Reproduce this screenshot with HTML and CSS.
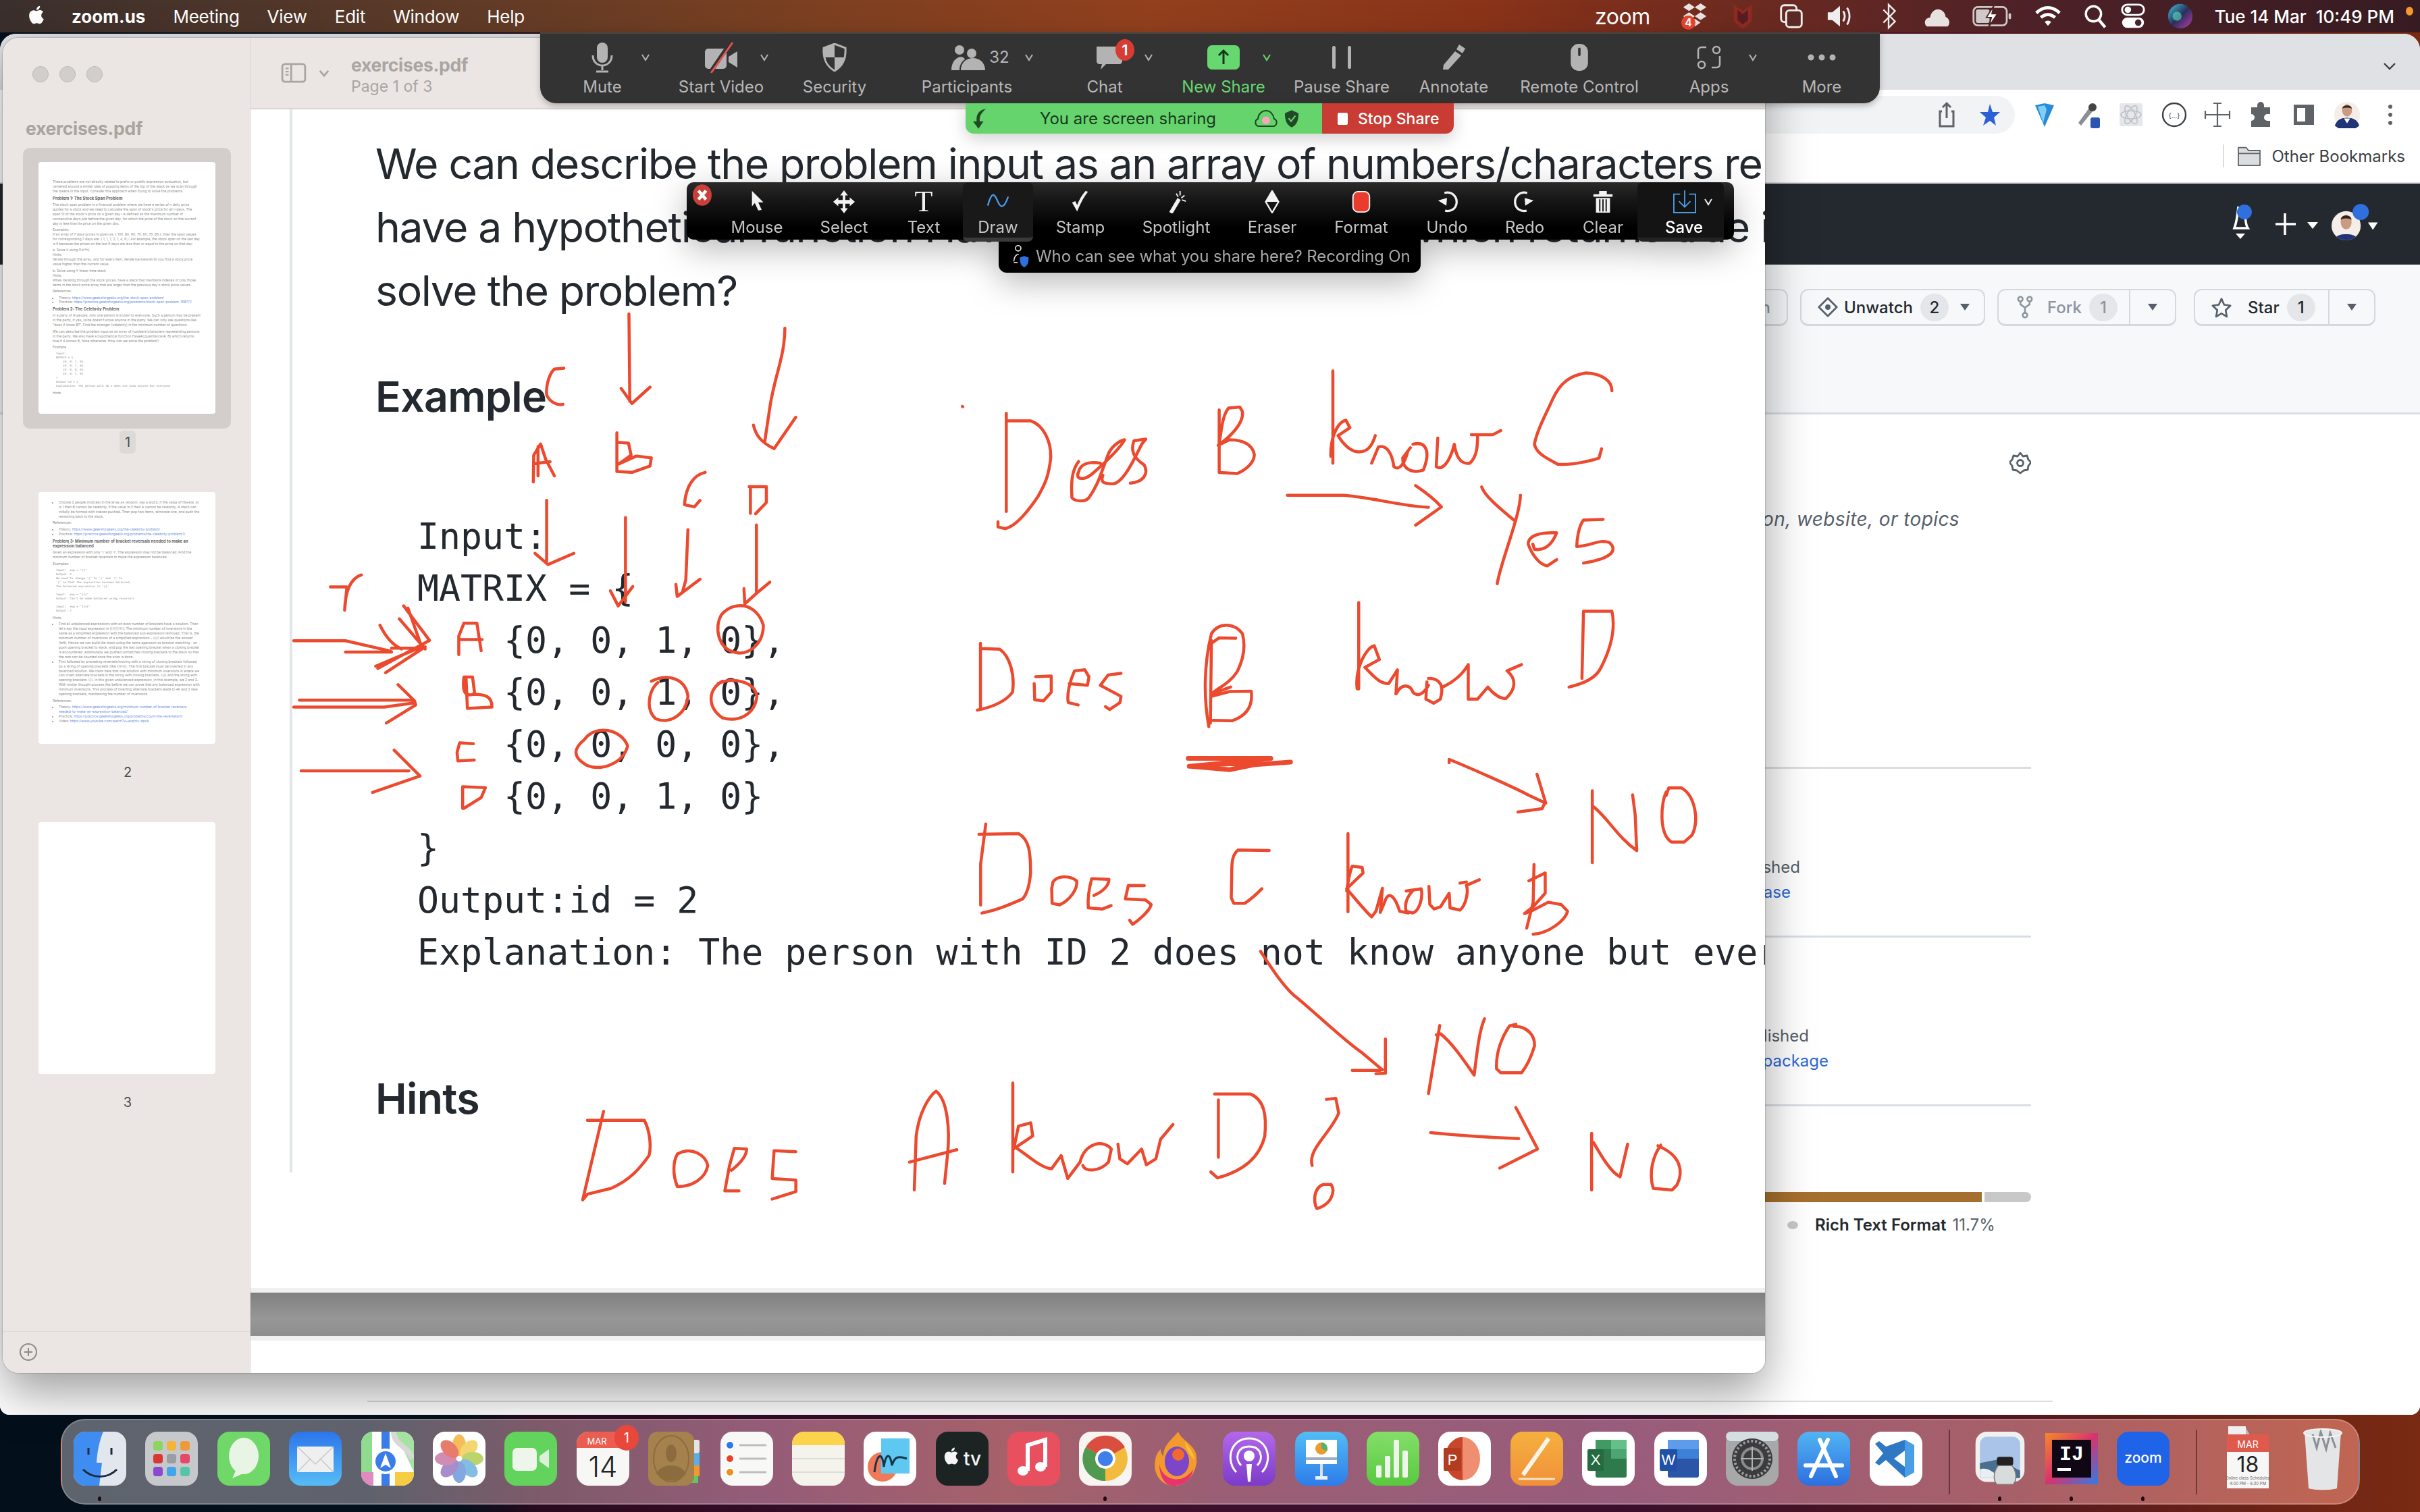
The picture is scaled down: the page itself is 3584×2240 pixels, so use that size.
FILE: index.html
```html
<!DOCTYPE html>
<html lang="en">
<head>
    <meta charset="UTF-8">
    <title>zoom.us - exercises.pdf</title>
    <link rel="stylesheet" href="styles.css">
</head>
<body>
<div class="desktop">

    <header class="menubar">
        <div class="menu-left">
            <svg class="apple" viewBox="0 0 24 24"><path fill="#fff" d="M18.71 19.5c-.83 1.24-1.71 2.45-3.05 2.47-1.34.03-1.77-.79-3.29-.79-1.53 0-2 .77-3.27.82-1.31.05-2.3-1.32-3.14-2.53C4.25 17 2.94 12.45 4.7 9.39c.87-1.52 2.43-2.48 4.12-2.51 1.28-.02 2.5.87 3.29.87.78 0 2.26-1.07 3.8-.91.65.03 2.47.26 3.64 1.98-.09.06-2.17 1.28-2.15 3.81.03 3.02 2.65 4.03 2.68 4.04-.03.07-.42 1.44-1.38 2.83M13 3.5c.73-.83 1.94-1.46 2.94-1.5.13 1.17-.34 2.35-1.04 3.19-.69.85-1.83 1.51-2.95 1.42-.15-1.15.41-2.35 1.05-3.11z"/></svg>
            <span class="menu-app">zoom.us</span>
            <span>Meeting</span>
            <span>View</span>
            <span>Edit</span>
            <span>Window</span>
            <span>Help</span>
        </div>
        <div class="menu-right">
            <span class="menu-zoom">zoom</span>
            <svg class="st" viewBox="0 0 44 44"><g fill="#e9e4e2"><path d="M14 2l9 6-9 6-9-6zM32 2l9 6-9 6-9-6zM14 16l9 6-9 6-9-6zM32 16l9 6-9 6-9-6zM23 26l9 6-9 6-9-6z"/></g><circle cx="13" cy="32" r="11" fill="#e5452f"/><text x="13" y="38" class="st-badge">4</text></svg>
            <svg class="st" viewBox="0 0 44 44"><path d="M8 4l14 10L36 4v26l-14 12L8 30z" fill="#8f2a24"/><path d="M14 12v16l8 7 8-7V12l-8 7z" fill="#5a1d1f"/></svg>
            <svg class="st" viewBox="0 0 44 44"><g fill="none" stroke="#eee" stroke-width="3"><rect x="6" y="5" width="24" height="26" rx="5"/><rect x="14" y="13" width="24" height="26" rx="5" fill="#5b2a24"/></g></svg>
            <svg class="st" viewBox="0 0 44 44"><path d="M3 16h7l12-10v32L10 28H3z" fill="#eee"/><path d="M27 14c3 5 3 11 0 16M33 9c5 8 5 18 0 26" fill="none" stroke="#eee" stroke-width="3"/></svg>
            <svg class="st" viewBox="0 0 44 44"><path d="M14 12l18 18-10 10V4l10 10-18 18" fill="none" stroke="#eee" stroke-width="2.5"/></svg>
            <svg class="st" viewBox="0 0 44 44"><path d="M6 38c-6-5-3-14 5-14 1-9 9-15 16-12 6 2 8 8 8 11 6 2 8 11 3 15z" fill="#e7e2e0"/></svg>
            <svg class="st st-wide" viewBox="0 0 68 44"><rect x="3" y="7" width="54" height="30" rx="7" fill="none" stroke="#cfcac8" stroke-width="3"/><rect x="7" y="11" width="22" height="22" rx="3" fill="#cfcac8"/><path d="M36 5L24 24h8l-4 15 14-21h-9z" fill="#fff" stroke="#4c2226" stroke-width="2"/><rect x="60" y="17" width="4" height="10" rx="2" fill="#cfcac8"/></svg>
            <svg class="st" viewBox="0 0 44 44"><g fill="none" stroke="#fff" stroke-width="5"><path d="M4 17c11-11 25-11 36 0M11 24c7-6 15-6 22 0"/></g><path d="M17 31c3-3 7-3 10 0l-5 6z" fill="#fff"/></svg>
            <svg class="st st-search" viewBox="0 0 44 44"><circle cx="19" cy="18" r="13" fill="none" stroke="#fff" stroke-width="4"/><path d="M28 28l11 13" stroke="#fff" stroke-width="5"/></svg>
            <svg class="st st-ctrl" viewBox="0 0 44 44"><rect x="5" y="4" width="34" height="16" rx="8" fill="none" stroke="#fff" stroke-width="3"/><circle cx="14" cy="12" r="5" fill="#fff"/><rect x="5" y="24" width="34" height="16" rx="8" fill="#fff"/><circle cx="30" cy="32" r="5" fill="#46222a"/></svg>
            <svg class="st" viewBox="0 0 44 44"><defs><linearGradient id="siri" x1="0" y1="0" x2="1" y2="1"><stop offset="0" stop-color="#3ec6e0"/><stop offset=".5" stop-color="#28305a"/><stop offset="1" stop-color="#c23bb0"/></linearGradient></defs><circle cx="22" cy="22" r="19" fill="url(#siri)"/><circle cx="17" cy="22" r="7" fill="#5ee0c0" opacity=".6"/></svg>
            <span class="menu-clock">Tue 14 Mar&nbsp;&nbsp;10:49 PM</span>
        </div>
    </header>
    <span class="rec-dot"></span>

    <!-- browser window behind the preview -->
    <section class="browser">
        <div class="tabstrip">
            <svg class="ico-chev" viewBox="0 0 20 12"><path d="M2 2l8 8 8-8" fill="none" stroke="#3c4043" stroke-width="2.4"/></svg>
        </div>
        <div class="addrbar">
            <div class="addr-pill">
                <svg class="addr-ico" viewBox="0 0 30 40"><path d="M15 3v22M9 9l6-6 6 6M8 15H5v22h20V15h-3" fill="none" stroke="#5f6368" stroke-width="3"/></svg>
                <svg class="addr-ico" viewBox="0 0 30 40"><path d="M15 4l4 12 11 0-9 8 3 12-9-7-10 7 4-12-9-8h12z" fill="#2a62d6"/></svg>
            </div>
            <div class="ext-row">
                <svg class="ext" viewBox="0 0 40 40"><path d="M6 6l14-3 14 3-14 32z" fill="#2a8cd8"/><path d="M10 8l10-2 3 6-5 20z" fill="#7fd0f4"/></svg>
                <svg class="ext" viewBox="0 0 40 40"><path d="M6 32l16-22 5 5-17 21z" fill="#8a8f96"/><circle cx="27" cy="9" r="6" fill="#444"/><rect x="24" y="24" width="14" height="16" rx="3" fill="#2b55b0"/></svg>
                <svg class="ext" viewBox="0 0 40 40"><rect x="3" y="3" width="34" height="34" rx="3" fill="#e5e7ea"/><g fill="none" stroke="#bdc1c6" stroke-width="1.6"><ellipse cx="20" cy="20" rx="15" ry="6"/><ellipse cx="20" cy="20" rx="15" ry="6" transform="rotate(60 20 20)"/><ellipse cx="20" cy="20" rx="15" ry="6" transform="rotate(120 20 20)"/></g></svg>
                <svg class="ext" viewBox="0 0 40 40"><circle cx="20" cy="20" r="17" fill="none" stroke="#3c4043" stroke-width="2.4"/><text x="20" y="25" class="ext-text">{...}</text></svg>
                <svg class="ext" viewBox="0 0 40 40"><path d="M20 3v34M2 20h36M14 3h12M14 37h12M2 14v12M38 14v12" fill="none" stroke="#5f6368" stroke-width="2.2"/></svg>
                <svg class="ext" viewBox="0 0 40 40"><path d="M15 6a5 5 0 0 1 10 0v3h9v10h-4a5 5 0 0 0 0 10h4v9H6v-9a5 5 0 0 0 0-10V9h9z" fill="#5f6368"/></svg>
                <svg class="ext" viewBox="0 0 40 40"><rect x="5" y="5" width="30" height="30" fill="#5f6368"/><rect x="10" y="10" width="12" height="20" fill="#fff"/></svg>
                <svg class="ext" viewBox="0 0 44 44"><circle cx="22" cy="22" r="21" fill="#f5ede7"/><path d="M2 40c3-10 11-13 20-13s17 3 20 13l-6 4H8z" fill="#1f3575"/><path d="M17 28l5 8 5-8z" fill="#fff"/><ellipse cx="22" cy="15" rx="8" ry="10" fill="#c99b80"/><path d="M14 12c1-7 15-7 16 0-4-2-12-2-16 0z" fill="#2d2420"/></svg>
                <svg class="ext" viewBox="0 0 40 40"><g fill="#5f6368"><circle cx="20" cy="8" r="3"/><circle cx="20" cy="20" r="3"/><circle cx="20" cy="32" r="3"/></g></svg>
            </div>
        </div>
        <div class="bookmarks">
            <span class="bm-sep"></span>
            <svg class="bm-folder" viewBox="0 0 40 36"><path d="M2 4h13l4 5h19v25H2z" fill="#dcdde0" stroke="#5f6368" stroke-width="2"/><path d="M2 14h36" stroke="#5f6368" stroke-width="2"/></svg>
            <span>Other Bookmarks</span>
        </div>
        <div class="gh-header">
            <svg class="gh-bell" viewBox="0 0 40 64"><path d="M18 6c-1 10-2 22-6 32h20c-4-6-4-18-4-26" fill="none" stroke="#fff" stroke-width="3.5"/><path d="M14 46h14l-7 8z" fill="#fff"/><circle cx="27" cy="14" r="11" fill="#2f6fde"/></svg>
            <svg class="gh-plus" viewBox="0 0 66 40"><path d="M15 4v32M1 20h30" stroke="#fff" stroke-width="3.5"/><path d="M48 17h16l-8 10z" fill="#fff"/></svg>
            <svg class="gh-avatar" viewBox="0 0 80 60"><defs><clipPath id="face"><circle cx="33" cy="32" r="18"/></clipPath></defs><g clip-path="url(#face)"><rect x="10" y="10" width="50" height="50" fill="#f5ede7"/><g transform="translate(13.5 9.5) scale(.75)"><path d="M4 58c3-12 12-14 22-14s19 2 22 14z" fill="#1f3575"/><ellipse cx="26" cy="24" rx="9" ry="12" fill="#c99b80"/><path d="M17 20c1-9 17-9 18 0-4-3-14-3-18 0z" fill="#2d2420"/></g></g><circle cx="51" cy="15" r="10" fill="#2f6fde"/><path d="M60 28h12l-6 9z" fill="#fff"/></svg>
        </div>
        <div class="gh-repohead">
            <div class="gh-btn gh-btn-pin"><span>Pin</span></div>
            <div class="gh-btn gh-btn-watch">
                <svg class="gh-ico" viewBox="0 0 34 34"><path d="M17 2L32 17 17 32 2 17z" fill="none" stroke="#57606a" stroke-width="3" stroke-linejoin="round"/><circle cx="17" cy="17" r="4.5" fill="#57606a"/></svg>
                <span class="gh-label">Unwatch</span>
                <span class="gh-count">2</span>
                <span class="gh-caret"></span>
            </div>
            <div class="gh-btn gh-btn-fork">
                <div class="gh-main">
                    <svg class="gh-ico" viewBox="0 0 34 40"><g fill="none" stroke="#8c959f" stroke-width="3"><circle cx="9" cy="6" r="4"/><circle cx="25" cy="6" r="4"/><circle cx="17" cy="34" r="4"/><path d="M9 10v5l8 6 8-6v-5M17 21v9"/></g></svg>
                    <span class="gh-label gh-muted">Fork</span>
                    <span class="gh-count gh-muted">1</span>
                </div>
                <div class="gh-drop"><span class="gh-caret"></span></div>
            </div>
            <div class="gh-btn gh-btn-star">
                <div class="gh-main">
                    <svg class="gh-ico" viewBox="0 0 34 34"><path d="M17 3l4.5 10 10.5 1.5-8 7.5 2 11-9-5.5-9 5.5 2-11-8-7.5 10.5-1.5z" fill="none" stroke="#57606a" stroke-width="3" stroke-linejoin="round"/></svg>
                    <span class="gh-label">Star</span>
                    <span class="gh-count">1</span>
                </div>
                <div class="gh-drop"><span class="gh-caret"></span></div>
            </div>
        </div>
        <div class="gh-body">
            <div class="gh-side">
                <div class="gh-gear">
                    <svg viewBox="0 0 32 34"><path d="M16 2l4 5 6-1 2 6 4 4-4 5-1 6-6 1-5 4-5-4-6-1-1-6-4-5 4-4 2-6 6 1z" fill="none" stroke="#57606a" stroke-width="2.8" stroke-linejoin="round"/><circle cx="16" cy="17" r="4.5" fill="none" stroke="#57606a" stroke-width="2.8"/></svg>
                </div>
                <div class="gh-desc">No description, website, or topics</div>
                <div class="gh-block gh-block-rel">
                    <div class="gh-line gh-end-rel1">No releases published</div>
                    <div class="gh-link gh-end-rel2">Create a new release</div>
                </div>
                <div class="gh-block gh-block-pkg">
                    <div class="gh-line gh-end-pkg1">No packages published</div>
                    <div class="gh-link gh-end-pkg2">Publish your first package</div>
                </div>
                <div class="gh-langs">
                    <div class="gh-bar"><span class="gh-bar-a"></span><span class="gh-bar-b"></span></div>
                    <div class="gh-lang"><i></i><b>Rich Text Format</b><span>11.7%</span></div>
                </div>
            </div>
            <div class="gh-footline"></div>
        </div>
    </section>

    <!-- preview window with the pdf -->
    <section class="preview">
        <aside class="pv-side">
            <div class="lights"><i></i><i></i><i></i></div>
            <div class="pv-side-title">exercises.pdf</div>
            <div class="thumb-wrap is-current">
                <div class="thumb">
                    <p>These problems are not directly related to prefix or postfix expression evaluation, but centered around a similar idea of popping items of the top of the stack as we scan through the tokens in the input. Consider this approach when trying to solve the problems.</p>
                    <h6>Problem 1: The Stock Span Problem</h6>
                    <p>The stock span problem is a financial problem where we have a series of n daily price quotes for a stock and we need to calculate the span of stock's price for all n days. The span Si of the stock's price on a given day i is defined as the maximum number of consecutive days just before the given day, for which the price of the stock on the current day is less than its price on the given day.</p>
                    <p>Examples:<br>If an array of 7 days prices is given as: { 100, 80, 60, 70, 60, 75, 85 }, then the span values for corresponding 7 days are: { 1, 1, 1, 2, 1, 4, 6 }. For example, the stock span on the last day is 6 because the prices on the last 6 days are less than or equal to the price on that day.</p>
                    <p>a. Solve it using O(n*n)<br>Hints:<br>Iterate through the array, and for every item, iterate backwards till you find a stock price value higher than the current value.</p>
                    <p>b. Solve using Y linear-time stack<br>Hints:<br>When iterating through the stock prices, have a stack that maintains indexes of only those items in the stock price array that are larger than the previous day's stock price values.</p>
                    <p>References:</p>
                    <ul><li>Theory: <a>https://www.geeksforgeeks.org/the-stock-span-problem/</a></li><li>Practice: <a>https://practice.geeksforgeeks.org/problems/stock-span-problem-1587/1/</a></li></ul>
                    <h6>Problem 2: The Celebrity Problem</h6>
                    <p>In a party of N people, only one person is known to everyone. Such a person may be present in the party, if yes, (s)he doesn't know anyone in the party. We can only ask questions like "does A know B?". Find the stranger (celebrity) in the minimum number of questions.</p>
                    <p>We can describe the problem input as an array of numbers/characters representing persons in the party. We also have a hypothetical function HaveAcquaintance(A, B) which returns true if A knows B, false otherwise. How can we solve the problem?</p>
                    <p>Example</p>
                    <pre>  Input:
  MATRIX = {
      {0, 0, 1, 0},
      {0, 0, 1, 0},
      {0, 0, 0, 0},
      {0, 0, 1, 0}
  }
  Output:id = 2
  Explanation: The person with ID 2 does not know anyone but everyone</pre>
                    <p>Hints</p>
                </div>
            </div>
            <div class="thumb-num is-current">1</div>
            <div class="thumb-wrap">
                <div class="thumb thumb-cont">
                    <ul><li>Choose 2 people (indices) in the array as random, say a and b. If the value of Have(a, b) is 1 then B cannot be celebrity. If the value is 0 then A cannot be celebrity. A stack can initially be formed with indices pushed. Then pop two items, eliminate one, and push the remaining back to the stack.</li></ul>
                    <p>References:</p>
                    <ul><li>Theory: <a>https://www.geeksforgeeks.org/the-celebrity-problem/</a></li><li>Practice: <a>https://practice.geeksforgeeks.org/problems/the-celebrity-problem/1/</a></li></ul>
                    <h6>Problem 3: Minimum number of bracket reversals needed to make an expression balanced</h6>
                    <p>Given an expression with only '}' and '{'. The expression may not be balanced. Find the minimum number of bracket reversals to make the expression balanced.</p>
                    <p>Examples:</p>
                    <pre>  Input:  exp = "}{"
  Output: 2
  We need to change '}' to '{' and '{' to
  '}' so that the expression becomes balanced,
  the balanced expression is '{}'

  Input:  exp = "{{{"
  Output: Can't be made balanced using reversals

  Input:  exp = "{{{{"
  Output: 2</pre>
                    <p>Hints:</p>
                    <ul><li>Find all unbalanced expressions with an even number of brackets have a solution. Then let's say the input expression is {{{{}}}{{{. The minimum number of inversions in the same as a simplified expression with the balanced sub-expression removed. That is, the minimum number of inversions of a simplified expression - {{{{ would be the answer (left). Hence we can build the stack using the same approach as bracket matching - on push opening bracket to stack, and pop the last opening bracket when a closing bracket is encountered. Additionally we pushed unmatched closing brackets to the stack so that the rest can be counted once the scan is done.</li><li>First followed by preceding reversals/moving with a string of closing brackets followed by a string of opening brackets (like }}}{{{). The first bracket must be inverted in any balanced solution. We claim here that one solution with minimum inversions is where we can invert alternate brackets in the string with closing brackets. {{{{ and the string with opening brackets: {{{. In this given unbalanced expression, in this example, we 2 and 2. With similar thought process like before we can prove that any balanced expression with minimum inversions. This process of inverting alternate brackets leads to 4k and 2 new opening brackets, maintaining the number of inversions.</li></ul>
                    <p>References:</p>
                    <ul><li>Theory: <a>https://www.geeksforgeeks.org/minimum-number-of-bracket-reversals-needed-to-make-an-expression-balanced/</a></li><li>Practice: <a>https://practice.geeksforgeeks.org/problems/count-the-reversals/0/</a></li><li>Video: <a>https://www.youtube.com/watch?v=wiqfxlv-dpxA</a></li></ul>
                </div>
            </div>
            <div class="thumb-num">2</div>
            <div class="thumb-wrap">
                <div class="thumb"></div>
            </div>
            <div class="thumb-num">3</div>
            <div class="pv-side-foot">
                <svg viewBox="0 0 28 28"><circle cx="14" cy="14" r="12" fill="none" stroke="#8d8985" stroke-width="2"/><path d="M14 8v12M8 14h12" stroke="#8d8985" stroke-width="2"/></svg>
            </div>
        </aside>
        <div class="pv-main">
            <div class="pv-toolbar">
                <svg class="pv-ico" viewBox="0 0 40 32"><rect x="2" y="2" width="36" height="28" rx="4" fill="none" stroke="#aaa5a2" stroke-width="3"/><path d="M16 2v28" stroke="#aaa5a2" stroke-width="3"/><path d="M7 9h5M7 14h5M7 19h5" stroke="#aaa5a2" stroke-width="2.5"/></svg>
                <svg class="pv-chev" viewBox="0 0 20 14"><path d="M3 3l7 8 7-8" fill="none" stroke="#aaa5a2" stroke-width="3"/></svg>
                <div class="pv-titles">
                    <strong>exercises.pdf</strong>
                    <span>Page 1 of 3</span>
                </div>
            </div>
            <div class="pv-page">
                <article class="md">
                    <p class="md-line">We can describe the problem input as an array of numbers/characters representing persons in the party.</p>
                    <p class="md-line">have a hypothetical function HaveAcquaintance(A, B) which returns true if A knows B, false otherwise.</p>
                    <p class="md-line">solve the problem?</p>
                    <h3 class="md-h md-h-first">Example</h3>
                    <pre class="md-pre">Input:
MATRIX = {
    {0, 0, 1, 0},
    {0, 0, 1, 0},
    {0, 0, 0, 0},
    {0, 0, 1, 0}
}
Output:id = 2
Explanation: The person with ID 2 does not know anyone but everyone knows him</pre>
                    <h3 class="md-h">Hints</h3>
                </article>
            </div>
            <div class="pv-gap">
                <div class="pv-gap-bar"></div>
            </div>
        </div>
    </section>

    <!-- red pen strokes drawn over the shared screen -->
    <svg class="ink" viewBox="0 0 3584 2240">
        <g transform="translate(400 400) scale(.638)">
            <path d="M833 102L835 305M815 275L840 310L882 272"/>
            <path d="M1195 135C1195 200 1170 250 1160 320L1148 400M1122 360C1128 385 1140 400 1170 415L1220 342"/>
            <path d="M682 228L660 230C648 240 640 270 642 290C648 305 665 315 680 312"/>
            <path d="M611 492L612 430L628 404L640 440L660 478M612 450L650 445M622 410L622 478"/>
            <path d="M805 378L805 468M805 400L832 402L838 430L810 450L850 432L885 436L882 455L840 470L805 468"/>
            <path d="M1010 470C985 475 965 500 962 545L985 550L998 535"/>
            <path d="M1112 503L1152 503L1152 540L1127 566M1115 503L1115 565"/>
            <path d="M642 535L642 675M615 658L645 684L705 658"/>
            <path d="M825 575L825 770M790 745L808 780L842 735"/>
            <path d="M970 603L965 720L958 745M942 730L945 758L998 718"/>
            <path d="M1129 592L1129 750M1100 740L1102 775L1130 750L1160 725"/>
            <path d="M140 736L178 736M212 708C190 715 175 740 173 790L178 740"/>
            <path d="M1048 800C1080 765 1130 775 1145 825C1145 870 1110 895 1080 888C1040 880 1030 830 1048 800"/>
            <path d="M438 893L438 850L450 820L480 820L490 884M438 858L492 858"/>
            <path d="M450 945C445 985 455 990 475 985L470 945L450 945M455 950L458 1018L515 1015C515 990 500 985 470 985"/>
            <path d="M472 1100L440 1098L434 1120L436 1140L474 1138"/>
            <path d="M447 1250L447 1200L500 1202L490 1225L450 1250"/>
            <path d="M885 955C925 935 965 950 970 990C965 1035 925 1055 895 1042C870 1020 880 975 900 958"/>
            <path d="M1040 960C1075 945 1125 955 1130 990C1125 1035 1085 1050 1050 1040C1015 1015 1015 975 1050 955"/>
            <path d="M730 1090C755 1055 815 1065 830 1105C820 1145 770 1165 735 1150C700 1130 705 1110 730 1090"/>
            <path d="M55 861L175 861L280 885M175 887L282 887M255 825C270 855 285 870 305 880M310 780L370 860M300 810L360 880M320 785L350 870M250 925L370 860M268 935L360 875M245 920L340 880M282 878L355 878"/>
            <path d="M55 1015L265 1015L335 1005M68 999L330 999M297 963L335 1000L338 1010L270 1052"/>
            <path d="M72 1163L322 1163M288 1115L348 1175L238 1213"/>
        </g>
        <g transform="translate(1400 500) scale(.7653 .5102)">
            <path d="M33 200L34 201"/>
            <path d="M118 220L118 505M118 242L165 242C190 255 205 300 204 350C200 400 195 420 180 460C160 505 135 550 115 555L102 550L102 535"/>
            <path d="M258 360C245 385 243 420 245 465C250 475 270 480 278 465C295 430 300 400 315 340C320 320 335 300 347 297C335 330 300 375 285 395C270 415 250 415 258 390C262 365 280 360 300 365M305 400C300 420 305 425 325 425C345 420 365 355 380 310L388 295L365 300C358 330 365 350 385 370C395 400 380 420 358 423"/>
            <path d="M530 210L530 392L565 395C580 385 598 365 598 340C595 315 580 297 550 297L528 313C550 290 578 250 575 215L570 202L548 205C535 230 535 270 530 305"/>
            <path d="M750 97L750 365M746 345C745 300 755 250 775 240L783 262L760 285C770 310 785 332 800 332C815 332 825 320 832 285M825 365L838 318C855 310 865 340 868 375C880 390 890 360 895 330M905 310C930 300 940 330 925 385C905 395 885 385 885 350L900 320M953 292L950 375C960 385 975 370 985 310C988 340 995 370 1015 365C1030 345 1030 310 1030 282M1018 282L1060 282L1075 270"/>
            <path d="M1290 155C1290 125 1270 105 1240 103C1210 110 1190 130 1175 180C1160 230 1145 270 1140 310C1145 340 1165 350 1185 368C1215 372 1255 355 1265 350L1270 323"/>
            <path d="M662 458L770 458C820 462 880 490 935 493M910 430C930 450 950 475 960 492L910 545"/>
            <path d="M1038 434C1045 465 1085 510 1100 530M1113 458C1112 520 1075 650 1068 715"/>
            <path d="M1137 600L1140 615C1160 620 1175 600 1183 567C1150 565 1128 575 1128 600C1135 630 1150 660 1165 663L1183 645"/>
            <path d="M1273 528L1235 530C1225 550 1222 590 1222 607C1250 605 1265 585 1285 595C1300 615 1295 640 1235 655"/>
            <path d="M68 888L68 1080M68 903L105 905C125 925 135 980 130 1030C115 1060 85 1075 62 1082"/>
            <path d="M175 985L205 983L205 1030L190 1055L173 1052L172 1005"/>
            <path d="M240 1005L275 1010L278 985L270 965L250 968C240 1000 235 1040 238 1060L257 1067"/>
            <path d="M340 975L315 980L300 1010L340 1042L338 1060L318 1080L310 1072"/>
            <path d="M510 1130C500 1050 500 950 515 860C530 825 560 830 575 860C582 900 575 940 565 970C550 1005 530 1015 515 1035L552 1015M515 1042L550 1028L592 1027C595 1060 590 1095 555 1113L518 1112M513 890L530 872L562 873M515 880L513 1120"/>
            <path class="ink-fat" d="M470 1222L630 1222L545 1235L472 1245L610 1232M475 1245L550 1255L600 1240L668 1233"/>
            <path d="M800 770L800 1020M797 1020C792 960 815 900 830 895L840 935L812 958C830 985 840 1005 858 1005L875 965L872 1035C885 1000 900 1010 905 1030C915 1045 925 1035 935 1010M935 990C960 990 965 1015 958 1050L945 1062L930 1050L932 1000M962 1015C985 1000 1000 980 1012 950L1012 1050L1030 1050L1050 1015C1060 1035 1075 1050 1085 1048C1105 1020 1105 990 1087 968L1115 950"/>
            <path d="M1232 990L1235 795L1290 795C1298 850 1285 910 1270 955C1260 990 1235 1005 1207 1015"/>
            <path d="M975 1235L975 1225C1000 1240 1100 1305 1130 1330L1162 1352L1145 1268M1160 1352L1155 1368L1108 1378"/>
            <path d="M1252 1316L1252 1525M1252 1360C1280 1390 1300 1450 1338 1490L1335 1385L1330 1328"/>
            <path d="M1395 1330L1400 1308L1425 1308C1450 1330 1460 1400 1445 1445L1430 1465L1405 1465C1380 1440 1385 1350 1395 1320"/>
        </g>
        <g transform="translate(1400 1180) scale(.6378 .3333)">
            <path d="M94 122L82 300L82 482M78 168L170 165C195 190 198 250 198 340C195 400 190 430 180 455C150 480 120 505 85 518"/>
            <path d="M250 380C260 350 290 350 305 375C308 410 290 460 265 482L248 475L247 410Z"/>
            <path d="M345 440C370 420 380 390 380 368L340 365C335 400 330 450 332 495L365 500L385 485"/>
            <path d="M462 396L425 395L418 455L465 460L478 480C475 510 445 555 435 568L428 550"/>
            <path d="M752 240L680 238C665 260 665 300 665 350L664 450L670 475L695 475C715 450 725 430 735 410"/>
            <path d="M935 165L935 512M932 420C935 380 940 330 945 310L968 315L970 340L932 410C950 450 975 510 990 535L1000 510L1015 408L1010 515L1020 470C1030 410 1045 450 1055 510L1075 518M1070 420L1105 410C1110 450 1100 510 1085 518L1070 510C1065 470 1075 440 1085 420M1123 400L1125 480L1135 500L1150 490L1170 430L1172 495L1195 505C1210 480 1215 420 1210 395L1240 370M1195 385L1210 380"/>
            <path d="M1367 302L1365 470L1350 585M1355 375L1393 340L1393 430L1365 490L1345 520L1360 510L1400 470L1430 480L1445 510C1440 550 1400 610 1365 612"/>
            <path d="M732 688C760 770 790 860 820 900C870 980 930 1090 965 1135L1015 1215M1022 1078L1022 1230L1000 1232M945 1217L1010 1217"/>
            <path d="M1148 1018L1122 1320M1140 1060L1150 1055C1180 1100 1210 1190 1228 1238C1235 1130 1240 1040 1252 988"/>
            <path d="M1310 1020L1325 1012L1320 1022C1350 1020 1370 1060 1368 1110C1360 1160 1350 1200 1338 1228L1290 1228L1280 1210C1278 1130 1295 1060 1310 1020"/>
        </g>
        <g transform="translate(400 1300) scale(1.403 .4847)">
            <path d="M352 715L330 985M335 742L395 742C402 780 402 830 400 850C390 890 380 925 360 950L335 968L330 985"/>
            <path d="M430 845C445 820 460 850 462 880C460 920 445 945 430 945C425 910 425 870 430 845"/>
            <path d="M487 895C498 870 503 850 503 830L490 828L485 880L480 958L495 958"/>
            <path d="M555 838L532 835L530 920L555 925L555 960L530 983"/>
            <path d="M680 955L682 790C685 720 695 670 703 653C715 680 718 770 715 850L712 935M675 870L725 832"/>
            <path d="M784 628L784 900M785 830L790 760L803 750L805 790L787 825C800 850 815 890 825 890L835 850L842 920L855 870C860 810 880 800 888 830L885 870C875 900 860 900 858 880M895 815L897 860L905 875L920 830L925 878L935 860L940 800L953 755"/>
            <path d="M1001 680L1001 855M997 662L1035 662C1050 680 1052 730 1050 790C1045 850 1030 895 1000 918L993 900"/>
            <path d="M1115 678L1125 675L1128 720C1120 780 1095 830 1100 880M1112 938C1100 950 1102 1000 1105 1012C1120 1000 1125 960 1120 938Z"/>
            <path d="M1225 780C1260 790 1290 795 1318 798M1315 703L1338 830L1298 888"/>
            <path d="M1395 782L1395 955M1397 810C1405 850 1415 900 1425 915L1433 815"/>
            <path d="M1465 820C1490 850 1492 900 1485 940L1480 955L1460 950C1455 900 1460 850 1468 818"/>
        </g>
    </svg>

    <!-- zoom meeting controls -->
    <div class="share-stack">
        <div class="zbar">
            <div class="zi">
                <div class="zi-top">
                    <svg class="zi-ico zi-mic" viewBox="0 0 36 46"><rect x="10" y="1" width="16" height="30" rx="8" fill="#b3b3b3"/><path d="M4 20c0 20 28 20 28 0M18 34v8M9 44h18" fill="none" stroke="#b3b3b3" stroke-width="3"/></svg>
                    <svg class="chev chev-mic" viewBox="0 0 14 12"><path d="M2 2l5 8 5-8" fill="none" stroke="#b3b3b3" stroke-width="2"/></svg>
                </div>
                <span>Mute</span>
            </div>
            <div class="zi">
                <div class="zi-top">
                    <svg class="zi-ico zi-vid" viewBox="0 0 50 46"><rect x="1" y="10" width="32" height="30" rx="5" fill="#b3b3b3"/><path d="M36 22l13-8v24l-13-8z" fill="#b3b3b3"/><path d="M39 1L9 45" stroke="#333" stroke-width="6"/><path d="M42 1L10 46" stroke="#e2534f" stroke-width="3"/></svg>
                    <svg class="chev chev-vid" viewBox="0 0 14 12"><path d="M2 2l5 8 5-8" fill="none" stroke="#b3b3b3" stroke-width="2"/></svg>
                </div>
                <span>Start Video</span>
            </div>
            <div class="zi">
                <div class="zi-top">
                    <svg class="zi-ico zi-sec" viewBox="0 0 36 42"><path d="M18 1l16 6c1 14-2 26-16 34C4 33 1 21 2 7z" fill="none" stroke="#b3b3b3" stroke-width="3"/><path d="M18 1v20H2c-1-5-1-9 0-14zM18 21h15c-2 8-7 15-15 20z" fill="#b3b3b3"/></svg>
                </div>
                <span>Security</span>
            </div>
            <div class="zi">
                <div class="zi-top zi-top-part">
                    <svg class="zi-ico zi-ppl" viewBox="0 0 50 38"><circle cx="12" cy="8" r="7" fill="#b3b3b3"/><circle cx="30" cy="13" r="7" fill="#b3b3b3"/><path d="M0 38c0-20 18-24 20-16-6 4-8 10-8 16zM14 38c0-24 36-24 36 0z" fill="#b3b3b3"/></svg>
                    <span class="zi-num">32</span>
                    <svg class="chev chev-ppl" viewBox="0 0 14 12"><path d="M2 2l5 8 5-8" fill="none" stroke="#b3b3b3" stroke-width="2"/></svg>
                </div>
                <span>Participants</span>
            </div>
            <div class="zi">
                <div class="zi-top">
                    <svg class="zi-ico zi-chat" viewBox="0 0 56 50"><path d="M4 14h34c2 0 4 2 4 4v18c0 2-2 4-4 4H18l-8 8 2-8H8c-2 0-4-2-4-4z" transform="translate(-4 -3)" fill="#b3b3b3"/><ellipse cx="42" cy="16" rx="14" ry="16" fill="#d63c34"/><text x="42" y="24" class="badge-text">1</text></svg>
                    <svg class="chev chev-chat" viewBox="0 0 14 12"><path d="M2 2l5 8 5-8" fill="none" stroke="#b3b3b3" stroke-width="2"/></svg>
                </div>
                <span>Chat</span>
            </div>
            <div class="zi zi-green">
                <div class="zi-top">
                    <svg class="zi-ico zi-share" viewBox="0 0 48 36"><rect width="48" height="36" rx="7" fill="#67d76f"/><path d="M24 28V8M17 15l7-7 7 7" fill="none" stroke="#16351c" stroke-width="3"/></svg>
                    <svg class="chev chev-share" viewBox="0 0 14 12"><path d="M2 2l5 8 5-8" fill="none" stroke="#67d76f" stroke-width="2"/></svg>
                </div>
                <span>New Share</span>
            </div>
            <div class="zi">
                <div class="zi-top">
                    <svg class="zi-ico zi-pause" viewBox="0 0 28 34"><rect x="0" y="0" width="5" height="34" rx="2.5" fill="#b3b3b3"/><rect x="23" y="0" width="5" height="34" rx="2.5" fill="#b3b3b3"/></svg>
                </div>
                <span>Pause Share</span>
            </div>
            <div class="zi">
                <div class="zi-top">
                    <svg class="zi-ico zi-pen" viewBox="0 0 36 40"><path d="M26 1l9 6-4 7-9-6zM20 11l9 6L10 38H2l1-7z" fill="#b3b3b3"/></svg>
                </div>
                <span>Annotate</span>
            </div>
            <div class="zi">
                <div class="zi-top">
                    <svg class="zi-ico zi-mouse" viewBox="0 0 30 46"><rect x="1" y="1" width="28" height="44" rx="13" fill="#b3b3b3"/><rect x="13" y="7" width="4" height="14" rx="2" fill="#333"/></svg>
                </div>
                <span>Remote Control</span>
            </div>
            <div class="zi">
                <div class="zi-top">
                    <svg class="zi-ico zi-apps" viewBox="0 0 36 36"><g fill="none" stroke="#b3b3b3" stroke-width="2.5"><path d="M14 3H7C4 3 2 5 2 8v12M22 33h7c3 0 5-2 5-5V16"/><circle cx="29" cy="7" r="5"/><circle cx="7" cy="29" r="5"/></g></svg>
                    <svg class="chev chev-apps" viewBox="0 0 14 12"><path d="M2 2l5 8 5-8" fill="none" stroke="#b3b3b3" stroke-width="2"/></svg>
                </div>
                <span>Apps</span>
            </div>
            <div class="zi">
                <div class="zi-top">
                    <svg class="zi-ico zi-more" viewBox="0 0 42 10"><circle cx="5" cy="5" r="4.5" fill="#b3b3b3"/><circle cx="21" cy="5" r="4.5" fill="#b3b3b3"/><circle cx="37" cy="5" r="4.5" fill="#b3b3b3"/></svg>
                </div>
                <span>More</span>
            </div>
        </div>
        <div class="sharebar">
            <div class="sharebar-green">
                <svg class="sb-arrow" viewBox="0 0 24 34"><path d="M22 1C9 3 6 12 7 21H1l9 12 8-12h-6c-1-8 3-14 10-20z" fill="#1f4a25"/></svg>
                <span class="sb-text">You are screen sharing</span>
                <svg class="sb-cloud" viewBox="0 0 40 30"><path d="M8 28C1 28-1 18 6 15 6 8 12 1 20 1s13 7 14 14c7 3 5 13-2 13z" fill="none" stroke="#1f4a25" stroke-width="2.4"/><ellipse cx="20" cy="18" rx="7" ry="7" fill="#f4a9b8"/></svg>
                <svg class="sb-shield" viewBox="0 0 24 30"><path d="M12 1l11 5c0 12-3 19-11 23C4 25 1 18 1 6z" fill="#1f4a25"/><path d="M7 14l4 5 7-9" fill="none" stroke="#67d76f" stroke-width="2.2"/></svg>
            </div>
            <div class="sharebar-red">
                <i></i>
                <span>Stop Share</span>
            </div>
        </div>
    </div>

    <div class="annot-stack">
        <div class="annot">
            <div class="an-close"><svg viewBox="0 0 30 34"><ellipse cx="15" cy="17" rx="15" ry="17" fill="#c8403a"/><path d="M9 10l12 14M21 10L9 24" stroke="#fff" stroke-width="5"/></svg></div>
            <div class="an"><svg viewBox="0 0 36 36"><path d="M8 1l20 20h-9l6 13-6 1-6-13-5 6z" fill="#f2f2f2" transform="translate(3 0) scale(.9)"/></svg><span>Mouse</span></div>
            <div class="an"><svg viewBox="0 0 36 36"><path d="M18 0l6 8h-4v7h7v-4l8 7-8 7v-4h-7v7h4l-6 8-6-8h4v-7H9v4l-8-7 8-7v4h7V8h-4z" fill="#f2f2f2"/></svg><span>Select</span></div>
            <div class="an an-t"><b>T</b><span>Text</span></div>
            <div class="an an-on"><svg viewBox="0 0 36 36"><path d="M2 24c6-22 10-20 15-8s10 14 17-6" fill="none" stroke="#4a9be8" stroke-width="2.5"/></svg><span>Draw</span></div>
            <div class="an"><svg viewBox="0 0 36 36"><path d="M5 19l8 14c6-14 10-22 17-31l-4-1c-6 7-10 14-13 22l-3-6z" fill="#f2f2f2"/></svg><span>Stamp</span></div>
            <div class="an"><svg viewBox="0 0 36 36"><path d="M7 34l13-22 5 3-13 22z" fill="#f2f2f2"/><path d="M24 1v7M31 8l-5 4M33 17l-6-2M18 5l3 5" stroke="#f2f2f2" stroke-width="2"/></svg><span>Spotlight</span></div>
            <div class="an"><svg viewBox="0 0 36 36"><path d="M18 1l10 17-10 17L8 18z" fill="none" stroke="#f2f2f2" stroke-width="2.5"/><path d="M18 1l10 17H8z" fill="#f2f2f2"/></svg><span>Eraser</span></div>
            <div class="an"><svg viewBox="0 0 36 36"><rect x="5" y="2" width="26" height="32" rx="8" fill="#ea3c2d" stroke="#f5f5f5" stroke-width="2"/></svg><span>Format</span></div>
            <div class="an"><svg viewBox="0 0 36 36"><path d="M14 4C26 1 34 10 33 20 32 29 24 34 15 32" fill="none" stroke="#f2f2f2" stroke-width="3.5"/><path d="M4 16l14-4-1 12z" fill="#f2f2f2"/></svg><span>Undo</span></div>
            <div class="an"><svg viewBox="0 0 36 36"><path d="M22 4C10 1 2 10 3 20 4 29 12 34 21 32" fill="none" stroke="#f2f2f2" stroke-width="3.5"/><path d="M32 16l-14-4 1 12z" fill="#f2f2f2"/></svg><span>Redo</span></div>
            <div class="an"><svg viewBox="0 0 36 36"><path d="M12 6V1h12v5h9v4H3V6z" fill="#f2f2f2"/><path d="M7 12h22v23H7z" fill="#f2f2f2"/><path d="M13 14v19M18 14v19M23 14v19" stroke="#111" stroke-width="2"/></svg><span>Clear</span></div>
            <div class="an an-save">
                <div class="an-save-top">
                    <svg viewBox="0 0 36 36"><path d="M11 6H1v29h34V6H25" fill="none" stroke="#4a9be8" stroke-width="2"/><path d="M18 0v26M9 17l9 9 9-9" fill="none" stroke="#4a9be8" stroke-width="2"/></svg>
                    <svg class="chev chev-save" viewBox="0 0 14 12"><path d="M2 2l5 8 5-8" fill="none" stroke="#e8e8e8" stroke-width="2"/></svg>
                </div>
                <span>Save</span>
            </div>
        </div>
        <div class="whosee">
            <svg viewBox="0 0 32 42"><circle cx="11" cy="6" r="5" fill="none" stroke="#eee" stroke-width="2"/><path d="M3 30c0-9 5-13 9-13" fill="none" stroke="#eee" stroke-width="2"/><path d="M22 20l8 3c0 10-2 15-8 18-6-3-8-8-8-18z" fill="#2f6fde"/><path d="M3 32h7" stroke="#eee" stroke-width="2"/></svg>
            <span>Who can see what you share here? Recording On</span>
        </div>
    </div>

    <!-- dock -->
    <footer class="dock">
        <div class="app is-open"><svg viewBox="0 0 78 80"><defs><clipPath id="sq"><rect width="78" height="80" rx="18"/></clipPath></defs><g clip-path="url(#sq)"><rect width="78" height="80" fill="#e2e7ee"/><path d="M0 0h44c-6 14-9 30-10 46h8l-4 34H0z" fill="#3f8df0"/><path d="M22 24v10M56 24v10" stroke="#1a2a40" stroke-width="3"/><path d="M14 56c14 14 36 14 50 0" fill="none" stroke="#1a2a40" stroke-width="3"/></g></svg></div>
        <div class="app"><svg viewBox="0 0 78 80"><rect width="78" height="80" rx="18" fill="#c6c8cc"/><g><rect x="12" y="14" width="14" height="14" rx="4" fill="#8ed460"/><rect x="32" y="14" width="14" height="14" rx="4" fill="#f2b53a"/><rect x="52" y="14" width="14" height="14" rx="4" fill="#ee9a3a"/><rect x="12" y="33" width="14" height="14" rx="4" fill="#d8382f"/><rect x="32" y="33" width="14" height="14" rx="4" fill="#9a9ea4"/><rect x="52" y="33" width="14" height="14" rx="4" fill="#e6486a"/><rect x="12" y="52" width="14" height="14" rx="4" fill="#8a4ad0"/><rect x="32" y="52" width="14" height="14" rx="4" fill="#42a5ea"/><rect x="52" y="52" width="14" height="14" rx="4" fill="#56c4a8"/></g></svg></div>
        <div class="app"><svg viewBox="0 0 78 80"><rect width="78" height="80" rx="18" fill="#6fd868"/><ellipse cx="39" cy="36" rx="22" ry="27" fill="#e8f5e4"/><path d="M28 56l-6 13 16-7z" fill="#e8f5e4"/></svg></div>
        <div class="app"><svg viewBox="0 0 78 80"><defs><linearGradient id="mailg" x1="0" y1="0" x2="0" y2="1"><stop offset="0" stop-color="#2d75ec"/><stop offset="1" stop-color="#56bdf6"/></linearGradient></defs><rect width="78" height="80" rx="18" fill="url(#mailg)"/><rect x="12" y="22" width="54" height="38" rx="3" fill="#efefef"/><path d="M12 22l27 26 27-26M12 60l20-20M66 60L46 40" fill="none" stroke="#c8c8c8" stroke-width="1.5"/></svg></div>
        <div class="app"><svg viewBox="0 0 78 80"><g clip-path="url(#sq)"><rect width="78" height="80" fill="#fff"/><path d="M0 0h16v70l-16 10z" fill="#8fdc90"/><path d="M0 60h18v20H0z" fill="#e08ac0"/><path d="M50 0h28v60z" fill="#a6e3a2"/><path d="M50 60h28v20H50z" fill="#f5cc42"/><path d="M48 0c0 20 20 20 28 40" fill="none" stroke="#d8d8d8" stroke-width="8"/><path d="M30 0h12v80H30z" fill="#3a7de8"/><circle cx="36" cy="44" r="19" fill="#fff"/><circle cx="36" cy="44" r="15" fill="#3a7de8"/><path d="M36 32l8 22-8-5-8 5z" fill="#fff"/></g></svg></div>
        <div class="app"><svg viewBox="0 0 78 80"><rect width="78" height="80" rx="18" fill="#fff"/><g opacity=".75"><ellipse cx="39" cy="20" rx="10" ry="16" fill="#f5a623"/><ellipse cx="39" cy="20" rx="10" ry="16" fill="#f0c93e" transform="rotate(45 39 40)"/><ellipse cx="39" cy="20" rx="10" ry="16" fill="#a8c63c" transform="rotate(90 39 40)"/><ellipse cx="39" cy="20" rx="10" ry="16" fill="#5aa8d8" transform="rotate(135 39 40)"/><ellipse cx="39" cy="20" rx="10" ry="16" fill="#5a8ad8" transform="rotate(180 39 40)"/><ellipse cx="39" cy="20" rx="10" ry="16" fill="#8a68b8" transform="rotate(225 39 40)"/><ellipse cx="39" cy="20" rx="10" ry="16" fill="#c2669a" transform="rotate(270 39 40)"/><ellipse cx="39" cy="20" rx="10" ry="16" fill="#e0503c" transform="rotate(315 39 40)"/></g></svg></div>
        <div class="app"><svg viewBox="0 0 78 80"><rect width="78" height="80" rx="18" fill="#62d45e"/><rect x="12" y="24" width="36" height="34" rx="7" fill="#eef6ec"/><path d="M52 36l14-10v28l-14-10z" fill="#dcefd8"/></svg></div>
        <div class="app app-cal"><svg viewBox="0 0 78 80"><g clip-path="url(#sq)"><rect width="78" height="80" fill="#f7f7f6"/><rect width="78" height="24" fill="#ea5d50"/></g><text x="30" y="19" class="cal-mon">MAR</text><text x="39" y="67" class="cal-day">14</text></svg><span class="app-badge">1</span></div>
        <div class="app"><svg viewBox="0 0 78 80"><rect x="60" y="12" width="16" height="20" rx="3" fill="#e4e4e4"/><rect x="62" y="32" width="14" height="18" fill="#5aaeea"/><rect x="62" y="50" width="14" height="16" fill="#ef9a30"/><rect x="62" y="66" width="12" height="10" fill="#60c860"/><rect width="68" height="80" rx="14" fill="#a5814e"/><ellipse cx="34" cy="40" rx="26" ry="34" fill="none" stroke="#8c6c3e" stroke-width="2"/><ellipse cx="34" cy="32" rx="8" ry="13" fill="#8c6c3e"/><path d="M12 62c8-16 36-16 44 0-10 14-34 14-44 0z" fill="#8c6c3e"/></svg></div>
        <div class="app"><svg viewBox="0 0 78 80"><rect width="78" height="80" rx="18" fill="#f8f8f6"/><circle cx="14" cy="20" r="6" fill="#2d78e8" stroke="#fff" stroke-width="2"/><circle cx="14" cy="40" r="6" fill="#e8402d" stroke="#fff" stroke-width="2"/><circle cx="14" cy="60" r="6" fill="#ec8e20" stroke="#fff" stroke-width="2"/><path d="M28 20h40M28 40h40M28 60h40" stroke="#bdbdbd" stroke-width="3"/></svg></div>
        <div class="app"><svg viewBox="0 0 78 80"><g clip-path="url(#sq)"><rect width="78" height="80" fill="#f4f3ec"/><rect width="78" height="20" fill="#fbd44b"/><path d="M0 40h78M0 60h78" stroke="#dcdcd8" stroke-width="2"/></g></svg></div>
        <div class="app"><svg viewBox="0 0 78 80"><rect width="78" height="80" rx="18" fill="#fff"/><circle cx="28" cy="52" r="22" fill="#ef7a5a"/><rect x="26" y="10" width="42" height="52" fill="#5ec8f0"/><path d="M16 60c4-30 12-30 14-8 3-20 9-22 12-2 4-14 10-14 22-10" fill="none" stroke="#16344e" stroke-width="3"/></svg></div>
        <div class="app"><svg viewBox="0 0 78 80"><rect width="78" height="80" rx="18" fill="#1b2423"/><path transform="translate(8 21) scale(1.25)" fill="#f5f5f5" d="M18.71 19.5c-.83 1.24-1.71 2.45-3.05 2.47-1.34.03-1.77-.79-3.29-.79-1.53 0-2 .77-3.27.82-1.31.05-2.3-1.32-3.14-2.53C4.25 17 2.94 12.45 4.7 9.39c.87-1.52 2.43-2.48 4.12-2.51 1.28-.02 2.5.87 3.29.87.78 0 2.26-1.07 3.8-.91.65.03 2.47.26 3.64 1.98-.09.06-2.17 1.28-2.15 3.81.03 3.02 2.65 4.03 2.68 4.04-.03.07-.42 1.44-1.38 2.83M13 3.5c.73-.83 1.94-1.46 2.94-1.5.13 1.17-.34 2.35-1.04 3.19-.69.85-1.83 1.51-2.95 1.42-.15-1.15.41-2.35 1.05-3.11z"/><text x="54" y="50" class="tv-text">tv</text></svg></div>
        <div class="app"><svg viewBox="0 0 78 80"><rect width="78" height="80" rx="18" fill="#e9505f"/><path d="M30 58V20l26-8v40" fill="none" stroke="#fff" stroke-width="6"/><ellipse cx="23" cy="58" rx="8" ry="7" fill="#fff"/><ellipse cx="49" cy="52" rx="8" ry="7" fill="#fff"/></svg></div>
        <div class="app is-open"><svg viewBox="0 0 78 80"><rect width="78" height="80" rx="18" fill="#f7f4f2"/><circle cx="39" cy="40" r="33" fill="#f2bb3d"/><path d="M39 40L10 23A33 33 0 0 1 68 23z" fill="#d94e3f"/><path d="M39 40L10 23A33 33 0 0 0 39 73z" fill="#4f9a50"/><circle cx="39" cy="40" r="15" fill="#fff"/><circle cx="39" cy="40" r="11" fill="#3f80e8"/></svg></div>
        <div class="app"><svg viewBox="0 0 78 80"><path d="M40 0c4 12 22 18 26 32 6 22-10 48-32 48C14 80 2 62 6 42c1-8 4-12 8-16 0 6 2 8 4 10C18 20 30 12 40 0z" fill="#f39a2e"/><path d="M50 14c6 10 14 18 14 28-6-6-14-18-14-28z" fill="#f8c12e"/><path d="M12 48c4 24 34 32 50 8-2 14-14 24-30 24-12 0-20-14-20-32z" fill="#e8336e"/><ellipse cx="38" cy="44" rx="18" ry="22" fill="#7d45c8"/><ellipse cx="40" cy="34" rx="9" ry="9" fill="#f06a2e"/></svg></div>
        <div class="app"><svg viewBox="0 0 78 80"><defs><linearGradient id="podg" x1="0" y1="0" x2="0" y2="1"><stop offset="0" stop-color="#b268ea"/><stop offset="1" stop-color="#7c3bc8"/></linearGradient></defs><rect width="78" height="80" rx="18" fill="url(#podg)"/><g fill="none" stroke="#fff" stroke-width="3"><path d="M20 60C4 44 10 10 39 10s35 34 19 50"/><path d="M27 50c-10-10-6-28 12-28s22 18 12 28"/></g><circle cx="39" cy="36" r="8" fill="#fff"/><path d="M35 48h8l-2 26h-4z" fill="#fff"/></svg></div>
        <div class="app"><svg viewBox="0 0 78 80"><defs><linearGradient id="keyg" x1="0" y1="0" x2="0" y2="1"><stop offset="0" stop-color="#52bdf4"/><stop offset="1" stop-color="#2d7cea"/></linearGradient></defs><rect width="78" height="80" rx="18" fill="url(#keyg)"/><rect x="16" y="12" width="46" height="36" fill="#fff"/><rect x="16" y="38" width="46" height="4" fill="#9cb0c4"/><circle cx="39" cy="25" r="9" fill="#ef9a2e"/><path d="M39 25V16a9 9 0 0 1 8 13z" fill="#53b36a"/><rect x="37" y="48" width="4" height="20" fill="#d8e0e8"/><rect x="30" y="66" width="18" height="5" fill="#eef2f6"/></svg></div>
        <div class="app"><svg viewBox="0 0 78 80"><defs><linearGradient id="numg" x1="0" y1="0" x2="0" y2="1"><stop offset="0" stop-color="#84de6a"/><stop offset="1" stop-color="#58c93e"/></linearGradient></defs><rect width="78" height="80" rx="18" fill="url(#numg)"/><rect x="14" y="50" width="8" height="18" rx="2" fill="#eef6ec"/><rect x="27" y="36" width="8" height="32" rx="2" fill="#eef6ec"/><rect x="40" y="12" width="8" height="56" rx="2" fill="#eef6ec"/><rect x="53" y="28" width="8" height="40" rx="2" fill="#eef6ec"/></svg></div>
        <div class="app"><svg viewBox="0 0 78 80"><rect width="78" height="80" rx="18" fill="#fff"/><ellipse cx="36" cy="40" rx="26" ry="32" fill="#ef8e70"/><path d="M36 8a26 32 0 0 0 0 64z" fill="#c8472a"/><rect x="8" y="24" width="26" height="34" rx="2" fill="#b13c20"/><text x="21" y="49" class="office-text">P</text></svg></div>
        <div class="app"><svg viewBox="0 0 78 80"><defs><linearGradient id="pagg" x1="0" y1="0" x2="0" y2="1"><stop offset="0" stop-color="#f5b03e"/><stop offset="1" stop-color="#f0903a"/></linearGradient></defs><rect width="78" height="80" rx="18" fill="url(#pagg)"/><path d="M16 62L54 8l5 4-38 54z" fill="#f8f4ea"/><path d="M12 70h54" stroke="#f9e4c4" stroke-width="3"/></svg></div>
        <div class="app"><svg viewBox="0 0 78 80"><rect width="78" height="80" rx="18" fill="#fff"/><rect x="20" y="12" width="46" height="56" rx="3" fill="#2e7a4c"/><rect x="20" y="12" width="23" height="14" fill="#3f9b62"/><rect x="43" y="12" width="23" height="14" fill="#64bf88"/><rect x="43" y="26" width="23" height="14" fill="#4ea574"/><rect x="8" y="26" width="24" height="32" rx="2" fill="#256a40"/><text x="20" y="49" class="office-text">X</text></svg></div>
        <div class="app"><svg viewBox="0 0 78 80"><rect width="78" height="80" rx="18" fill="#fff"/><rect x="20" y="12" width="46" height="56" rx="3" fill="#2b56a8"/><rect x="20" y="12" width="46" height="14" fill="#5c9ce8"/><rect x="20" y="26" width="46" height="14" fill="#3c80d8"/><rect x="8" y="26" width="26" height="32" rx="2" fill="#2050a8"/><text x="21" y="49" class="office-text">W</text></svg></div>
        <div class="app"><svg viewBox="0 0 78 80"><rect width="78" height="80" rx="18" fill="#a7a9a9"/><rect width="78" height="14" rx="7" fill="#d4dde0"/><circle cx="39" cy="40" r="30" fill="#3c3c3e"/><circle cx="39" cy="40" r="26" fill="none" stroke="#9a9c9e" stroke-width="4" stroke-dasharray="3 3"/><circle cx="39" cy="40" r="17" fill="#8a8c8e"/><circle cx="39" cy="40" r="13" fill="#3c3c3e"/><path d="M39 22v36M22 40h34" stroke="#b0b2b4" stroke-width="2"/></svg></div>
        <div class="app"><svg viewBox="0 0 78 80"><defs><linearGradient id="appg" x1="0" y1="0" x2="0" y2="1"><stop offset="0" stop-color="#52b4f2"/><stop offset="1" stop-color="#2c6fe0"/></linearGradient></defs><rect width="78" height="80" rx="18" fill="url(#appg)"/><path d="M45 12L20 66M33 12l24 54M12 50h54" stroke="#fff" stroke-width="6" stroke-linecap="round"/></svg></div>
        <div class="app"><svg viewBox="0 0 78 80"><rect width="78" height="80" rx="18" fill="#fff"/><path d="M52 12l14 8v40l-14 8-28-26-10 8-6-4 12-14-12-14 6-4 10 8z" fill="#2f78c4"/><path d="M52 12l14 8v40l-14 8z" fill="#4a9ee8"/><path d="M52 28L36 40l16 12z" fill="#fff"/></svg></div>
        <span class="dock-sep dock-sep-a"></span>
        <div class="app is-open"><svg viewBox="0 0 78 86"><rect width="78" height="80" rx="18" fill="#f0f0ee"/><rect x="7" y="8" width="64" height="66" rx="12" fill="#a9c4e8"/><path d="M7 50l30-6 34 18v12H7z" fill="#4a6f8e"/><path d="M7 60c10-4 24 4 30 14H7z" fill="#e8eef2"/><rect x="34" y="40" width="26" height="14" rx="4" fill="#222"/><path d="M36 54h22c8 10 8 24 2 30H34c-6-6-6-20 2-30z" fill="#d8dcdc" stroke="#777" stroke-width="1.5"/></svg></div>
        <div class="app is-open"><svg viewBox="0 0 78 80"><defs><linearGradient id="ijg" x1="0" y1="0" x2="1" y2="1"><stop offset="0" stop-color="#f58a28"/><stop offset=".5" stop-color="#d8326e"/><stop offset="1" stop-color="#2f7ce8"/></linearGradient></defs><rect x="0" y="2" width="78" height="76" fill="url(#ijg)"/><rect x="10" y="12" width="58" height="56" fill="#0f0714"/><text x="39" y="42" class="ij-text">IJ</text><rect x="18" y="54" width="20" height="4" fill="#fff"/></svg></div>
        <div class="app is-open"><svg viewBox="0 0 78 80"><rect width="78" height="80" rx="18" fill="#1f63e8"/><text x="39" y="46" class="zoom-text">zoom</text></svg></div>
        <span class="dock-sep dock-sep-b"></span>
        <div class="app app-doc"><svg viewBox="0 0 78 92"><rect x="10" y="0" width="26" height="18" fill="#f0f0f0"/><path d="M36 2l10 18H36z" fill="#bbb"/><rect x="8" y="12" width="62" height="80" fill="#f7f7f7"/><rect x="8" y="12" width="62" height="26" fill="#dd5a4d"/><text x="39" y="32" class="doc-mon">MAR</text><text x="39" y="68" class="doc-day">18</text><text x="39" y="79" class="doc-note">Online class Scheduled</text><text x="39" y="87" class="doc-note">4:00 PM - 6:30 PM</text></svg></div>
        <div class="app app-trash"><svg viewBox="0 0 78 92"><path d="M12 6c10-6 44-6 54 0l-6 84c-8 3-34 3-42 0z" fill="#e4e5e6"/><path d="M24 10l6 20 6-24 8 26 6-24 8 22" fill="none" stroke="#8b8f96" stroke-width="3"/><ellipse cx="39" cy="8" rx="28" ry="6" fill="none" stroke="#f4f4f4" stroke-width="2"/></svg></div>
    </footer>
</div>
</body>
</html>
```

FILE: styles.css
```css
* {
    box-sizing: border-box;
}

html, body {
    margin: 0;
    padding: 0;
}

body {
    font-family: "Inter", "Liberation Sans", sans-serif;
    background: #111;
}

svg {
    display: block;
    flex: none;
}

.desktop {
    position: relative;
    width: 3584px;
    height: 2240px;
    overflow: hidden;
    background: linear-gradient(90deg, #03101c 0, #04111d 680px, #2a0a1e 800px, #3d0f2e 1500px, #3a0f2c 2400px, #4d1620 2900px, #7a2a12 3584px);
}

/* menu bar */
.menubar {
    height: 48px;
    display: flex;
    justify-content: space-between;
    align-items: center;
    color: #fff;
    font-size: 26px;
    background: linear-gradient(90deg, #3a2f2d 0, #5b3a28 600px, #7c4021 1200px, #92401e 1700px, #8a3319 2200px, #4d2127 3000px, #371b22 3584px);
}

.menu-left {
    display: flex;
    align-items: center;
    padding-left: 38px;
    gap: 41px;
    letter-spacing: -.25px;
}

.apple {
    width: 32px;
    height: 36px;
    margin-bottom: 4px;
    margin-right: -5px;
}

.menu-app {
    font-weight: 700;
    letter-spacing: 0;
}

.menu-right {
    display: flex;
    align-items: center;
    padding-right: 38px;
    gap: 30px;
}

.menu-zoom {
    font-size: 32px;
    font-weight: 400;
    margin-right: 14px;
    letter-spacing: -.5px;
}

.st {
    width: 42px;
    height: 42px;
}

.st-wide {
    width: 62px;
}

.st-search {
    width: 38px;
    height: 38px;
    margin-right: -20px;
}

.st-ctrl {
    margin-left: 6px;
    margin-right: -2px;
}

.st-badge {
    fill: #fff;
    font-size: 16px;
    font-weight: 700;
    text-anchor: middle;
}

.menu-clock {
    font-weight: 500;
    white-space: nowrap;
}

.rec-dot {
    position: absolute;
    left: 3563px;
    top: 10px;
    width: 11px;
    height: 13px;
    border-radius: 50%;
    background: #f29a2e;
}

/* browser */
.browser {
    position: absolute;
    left: 0;
    top: 50px;
    width: 3584px;
    height: 2046px;
    border-radius: 24px 24px 14px 14px;
    background: #fff;
    overflow: hidden;
}

.tabstrip {
    height: 83px;
    background: #dfe1e5;
    display: flex;
    justify-content: flex-end;
    padding: 42px 35px 0 0;
}

.ico-chev {
    width: 20px;
    height: 12px;
}

.addrbar {
    height: 65px;
    display: flex;
    align-items: center;
    justify-content: flex-end;
    background: #fff;
    padding-top: 9px;
}

.addr-pill {
    height: 56px;
    width: 500px;
    background: #f1f3f4;
    border-radius: 0 28px 28px 0;
    display: flex;
    justify-content: flex-end;
    align-items: center;
    gap: 34px;
    padding-right: 22px;
}

.addr-ico {
    width: 30px;
    height: 40px;
}

.ext-row {
    display: flex;
    align-items: center;
    width: 600px;
    padding-left: 24px;
    gap: 24px;
}

.ext {
    width: 40px;
    height: 40px;
}

.ext-text {
    font-size: 10px;
    text-anchor: middle;
    fill: #3c4043;
}

.bookmarks {
    height: 74px;
    display: flex;
    align-items: center;
    justify-content: flex-end;
    padding: 0 22px 6px 0;
    border-bottom: 2px solid #dadce0;
    font-size: 24px;
    color: #3c4043;
}

.bm-sep {
    width: 2px;
    height: 34px;
    background: #dadce0;
    margin-right: 18px;
}

.bm-folder {
    width: 38px;
    height: 32px;
    margin-right: 14px;
}

.gh-header {
    height: 120px;
    background: #24292f;
    display: flex;
    align-items: center;
    justify-content: flex-end;
    padding-right: 53px;
}

.gh-bell {
    width: 40px;
    height: 64px;
    margin-right: 32px;
}

.gh-plus {
    width: 66px;
    height: 40px;
}

.gh-avatar {
    width: 96px;
    height: 72px;
}

.gh-repohead {
    height: 222px;
    background: #f6f8fa;
    border-bottom: 3px solid #d8dee4;
    display: flex;
    justify-content: flex-end;
    align-items: flex-start;
    padding: 36px 66px 0 0;
    gap: 18px;
}

.gh-btn {
    height: 55px;
    display: flex;
    align-items: center;
    background: #f6f8fa;
    border: 2px solid #d5d8dc;
    border-bottom-width: 3px;
    border-radius: 12px;
    font-size: 24px;
    font-weight: 500;
    color: #24292f;
}

.gh-btn-pin {
    width: 200px;
    justify-content: flex-end;
    padding-right: 24px;
    color: #8c959f;
}

.gh-btn-watch {
    width: 274px;
    padding-left: 24px;
}

.gh-btn-fork {
    width: 265px;
}

.gh-btn-star {
    width: 269px;
    margin-left: 8px;
}

.gh-main {
    flex: 1;
    height: 100%;
    display: flex;
    align-items: center;
    border-right: 2px solid #d5d8dc;
    padding-left: 24px;
}

.gh-drop {
    width: 66px;
    display: flex;
    justify-content: center;
}

.gh-ico {
    width: 30px;
    height: 34px;
    margin-right: 9px;
}

.gh-btn-fork .gh-ico {
    margin-right: 18px;
}

.gh-btn-star .gh-ico {
    margin-right: 24px;
}

.gh-count {
    min-width: 42px;
    height: 41px;
    border-radius: 21px;
    background: #e4e6e9;
    margin-left: 11px;
    display: flex;
    align-items: center;
    justify-content: center;
}

.gh-muted {
    color: #8c959f;
}

.gh-caret {
    width: 0;
    height: 0;
    border-left: 7px solid transparent;
    border-right: 7px solid transparent;
    border-top: 10px solid #57606a;
}

.gh-btn-watch .gh-caret {
    margin-left: 17px;
}

.gh-body {
    height: 1482px;
    background: #fff;
    position: relative;
}

.gh-side {
    margin-left: 2200px;
    width: 808px;
    color: #57606a;
    font-size: 24px;
}

.gh-gear {
    display: flex;
    justify-content: flex-end;
    padding: 55px 0 0 0;
}

.gh-gear svg {
    width: 32px;
    height: 34px;
}

.gh-desc {
    display: flex;
    justify-content: flex-end;
    white-space: nowrap;
    font-style: italic;
    font-size: 28px;
    letter-spacing: .4px;
    line-height: 40px;
    padding-right: 106px;
    margin-top: 46px;
    height: 387px;
}

.gh-block {
    border-top: 3px solid #d8dee4;
    height: 250px;
    padding-top: 127px;
}

.gh-block-pkg {
    border-bottom: 3px solid #d8dee4;
    height: 253px;
}

.gh-line, .gh-link {
    display: flex;
    justify-content: flex-end;
    white-space: nowrap;
    line-height: 37px;
}

.gh-link {
    color: #2c68d4;
}

.gh-end-rel1 { padding-right: 342px; }
.gh-end-rel2 { padding-right: 356px; }
.gh-end-pkg1 { padding-right: 329px; }
.gh-end-pkg2 { padding-right: 300px; }

.gh-langs {
    padding-top: 127px;
}

.gh-bar {
    display: flex;
    gap: 4px;
    height: 15px;
}

.gh-bar-a {
    flex: 1;
    background: #a5702e;
}

.gh-bar-b {
    width: 69px;
    background: #c8c8c8;
    border-radius: 0 8px 8px 0;
}

.gh-lang {
    display: flex;
    align-items: center;
    margin-top: 20px;
    padding-left: 447px;
    line-height: 28px;
}

.gh-lang i {
    width: 16px;
    height: 12px;
    border-radius: 50%;
    background: #c8c8c8;
    margin-right: 25px;
}

.gh-lang b {
    color: #24292f;
    font-weight: 600;
    margin-right: 9px;
}

.gh-footline {
    position: absolute;
    left: 544px;
    bottom: 19px;
    width: 2496px;
    height: 2px;
    background: #d8dee4;
}

/* preview window */
.preview {
    position: absolute;
    left: 4px;
    top: 56px;
    width: 2610px;
    height: 1978px;
    display: flex;
    border-radius: 24px 0 20px 24px;
    background: #fff;
    overflow: hidden;
    box-shadow: 0 30px 70px rgba(0, 0, 0, .38), 0 0 2px rgba(0, 0, 0, .5);
}

.pv-side {
    width: 367px;
    flex: none;
    background: #ebe6e3;
    display: flex;
    flex-direction: column;
    border-right: 1px solid #d9d5d2;
    position: relative;
}

.lights {
    display: flex;
    gap: 16px;
    padding: 42px 0 0 44px;
}

.lights i {
    width: 24px;
    height: 24px;
    border-radius: 50%;
    background: #d2cecb;
    border: 1px solid #bdb9b6;
}

.pv-side-title {
    font-size: 26.5px;
    font-weight: 700;
    color: #a9a4a0;
    padding: 52px 0 0 34px;
    height: 97px;
    letter-spacing: -.3px;
}

.thumb-wrap {
    width: 308px;
    height: 416px;
    margin-left: 30px;
    padding: 21px 23px;
    border-radius: 10px;
}

.thumb-wrap.is-current {
    background: #d3cecb;
}

.thumb {
    width: 262px;
    height: 373px;
    background: #fff;
    border-radius: 4px;
    padding: 26px 22px 0 21px;
    overflow: hidden;
    font-size: 5px;
    line-height: 6.95px;
    color: #8b8b8b;
}

.thumb-cont {
    padding-top: 12px;
}

.thumb p {
    margin: 0 0 2.5px;
}

.thumb h6 {
    margin: 3px 0 2.5px;
    font-size: 6px;
    line-height: 7.5px;
    color: #666;
}

.thumb pre {
    margin: 3px 0 4px;
    font-family: "DejaVu Sans Mono", monospace;
    font-size: 4.2px;
    line-height: 6px;
}

.thumb ul {
    margin: 0 0 2.5px;
    padding-left: 9px;
}

.thumb a {
    color: #6d8fe0;
}

.thumb-num {
    width: 24px;
    height: 34px;
    margin: 3px 0 -5px 173px;
    border-radius: 6px;
    font-size: 20px;
    line-height: 34px;
    text-align: center;
    color: #4f4c4a;
}

.thumb-num.is-current {
    background: #dcd9d7;
}

.thumb-num + .thumb-wrap {
    margin-top: 41px;
}

.pv-side-foot {
    position: absolute;
    left: 0;
    right: 0;
    bottom: 0;
    height: 62px;
    border-top: 1px solid #dcd8d5;
    background: #ebe6e3;
    padding: 16px 0 0 24px;
}

.pv-side-foot svg {
    width: 28px;
    height: 28px;
}

.pv-main {
    flex: 1;
    min-width: 0;
    display: flex;
    flex-direction: column;
    background: #fff;
}

.pv-toolbar {
    height: 106px;
    flex: none;
    background: #ebe6e3;
    border-bottom: 2px solid #d9d5d2;
    display: flex;
    align-items: center;
    padding-left: 45px;
}

.pv-ico {
    width: 38px;
    height: 30px;
}

.pv-chev {
    width: 18px;
    height: 13px;
    margin-left: 17px;
}

.pv-titles {
    display: flex;
    flex-direction: column;
    margin-left: 31px;
    color: #aaa5a2;
    font-size: 23px;
    line-height: 30px;
    padding-top: 6px;
}

.pv-titles strong {
    font-size: 26.5px;
    line-height: 34px;
    letter-spacing: -.3px;
}

.pv-page {
    height: 1746px;
    flex: none;
    overflow: hidden;
    padding-left: 58px;
}

.md {
    height: 1575px;
    border-left: 4px solid #e3e5e8;
    padding: 34px 0 0 123px;
    color: #24292f;
    white-space: nowrap;
}

.md-line {
    margin: 0;
    font-size: 62.5px;
    line-height: 93.75px;
    letter-spacing: -1.35px;
}

.md-h {
    margin: 0;
    font-size: 62.5px;
    font-weight: 600;
    line-height: 94px;
    letter-spacing: -.65px;
}

.md-h-first {
    margin-top: 63px;
}

.md-pre {
    margin: 123px 0 0 0;
    padding-left: 62px;
    font-family: "DejaVu Sans Mono", monospace;
    font-size: 53.2px;
    line-height: 77px;
    height: 823px;
}

.pv-gap {
    flex: 1;
    background: #fff;
}

.pv-gap-bar {
    height: 78px;
    border-top: 7px solid #f0f0f0;
    border-bottom: 7px solid #f0f0f0;
    background: linear-gradient(180deg, #7f7f7f, #979797 60%, #8e8e8e);
}

/* pen strokes */
.ink {
    position: absolute;
    left: 0;
    top: 0;
    width: 3584px;
    height: 2240px;
    pointer-events: none;
}

.ink path {
    fill: none;
    stroke: #ec4a2f;
    stroke-width: 4.5px;
    stroke-linecap: round;
    stroke-linejoin: round;
    vector-effect: non-scaling-stroke;
}

.ink .ink-fat {
    stroke-width: 7px;
}

/* zoom bars */
.share-stack {
    position: absolute;
    left: 800px;
    top: 48px;
    width: 1984px;
}

.zbar {
    height: 105px;
    background: #333;
    border-top: 2px solid #454545;
    border-radius: 0 0 24px 24px;
    display: grid;
    grid-template-columns: 184px 168px 168px 224px 184px 168px 182px 150px 222px 162px 172px;
    box-shadow: 0 4px 10px rgba(0, 0, 0, .25);
    font-size: 24px;
    color: #b8b8b8;
}

.zi {
    display: flex;
    flex-direction: column;
    align-items: center;
    white-space: nowrap;
    line-height: 30px;
}

.zi-top {
    width: 100%;
    height: 62px;
    display: grid;
    grid-template-columns: 1fr auto 1fr;
    align-items: center;
    justify-items: start;
    padding-top: 8px;
    margin-bottom: 2px;
}

.zi-ico {
    grid-column: 2;
}

.zi-mic { width: 36px; height: 46px; }
.zi-vid { width: 50px; height: 46px; }
.zi-sec { width: 36px; height: 42px; }
.zi-ppl { width: 50px; height: 38px; }
.zi-chat { width: 56px; height: 50px; margin-left: 16px; margin-right: -16px; margin-top: -4px; }
.zi-share { width: 48px; height: 36px; }
.zi-pause { width: 28px; height: 34px; }
.zi-pen { width: 36px; height: 40px; }
.zi-mouse { width: 28px; height: 42px; }
.zi-apps { width: 36px; height: 36px; }
.zi-more { width: 42px; height: 10px; }

.chev {
    width: 14px;
    height: 12px;
}

.chev-mic { margin-left: 39px; }
.chev-vid { margin-left: 32px; }
.chev-chat { margin-left: 30px; }
.chev-share { margin-left: 33px; }
.chev-apps { margin-left: 40px; }
.chev-save { margin-left: 10px; }

.zi-top-part {
    grid-template-columns: 1fr auto auto auto 1fr;
    padding-left: 76px;
}

.zi-num {
    font-size: 24px;
    margin-left: 6px;
}

.chev-ppl {
    margin-left: 22px;
}

.zi-green {
    color: #67d76f;
}

.badge-text {
    fill: #fff;
    font-size: 22px;
    font-weight: 600;
    text-anchor: middle;
}

.sharebar {
    width: 723px;
    height: 45px;
    margin-left: 630px;
    display: flex;
    border-radius: 0 0 12px 12px;
    overflow: hidden;
    box-shadow: 0 8px 24px rgba(0, 0, 0, .18);
    font-size: 24px;
}

.sharebar-green {
    width: 528px;
    background: #65d46d;
    color: #183a1e;
    display: flex;
    align-items: center;
    padding-left: 10px;
}

.sb-arrow {
    width: 22px;
    height: 32px;
}

.sb-text {
    margin-left: 78px;
    width: 318px;
    white-space: nowrap;
}

.sb-cloud {
    width: 34px;
    height: 28px;
}

.sb-shield {
    width: 22px;
    height: 28px;
    margin-left: 10px;
}

.sharebar-red {
    flex: 1;
    background: #c93c34;
    color: #fff;
    display: flex;
    align-items: center;
    padding-left: 23px;
    font-size: 23px;
    font-weight: 500;
}

.sharebar-red i {
    width: 15px;
    height: 18px;
    background: #fff;
    margin-right: 15px;
    border-radius: 2px;
}

.annot-stack {
    position: absolute;
    left: 1017px;
    top: 270px;
    width: 1551px;
    filter: drop-shadow(0 14px 24px rgba(0, 0, 0, .28));
}

.annot {
    height: 85px;
    display: grid;
    grid-template-columns: 50px 108px 150px 86px 134px 110px 174px 110px 154px 100px 130px 102px 138px;
    background: linear-gradient(180deg, #2a2a2a 0, #171717 30%, #000 80%);
    border-radius: 10px;
    font-size: 24px;
    color: #c4c4c4;
}

.an {
    display: flex;
    flex-direction: column;
    align-items: center;
    padding-top: 12px;
    white-space: nowrap;
    line-height: 30px;
}

.an svg {
    width: 34px;
    height: 34px;
    margin-bottom: 6px;
}

.an-close {
    padding: 3px 0 0 9px;
}

.an-close svg {
    width: 28px;
    height: 32px;
}

.an-t b {
    font-family: "Liberation Serif", serif;
    font-size: 44px;
    line-height: 34px;
    height: 34px;
    margin-bottom: 6px;
    color: #f2f2f2;
    font-weight: 400;
}

.an-on {
    margin: 0 15px;
    background: #191919;
    border-bottom: 6px solid #3a3a3a;
    border-radius: 8px;
}

.an-save {
    margin-right: 10px;
    padding-left: 10px;
    background: #141414;
    border-bottom: 6px solid #242424;
    border-radius: 8px;
    color: #fff;
    font-weight: 500;
}

.an-save-top {
    display: flex;
    align-items: center;
    margin-left: 28px;
}

.an .chev-save {
    width: 16px;
    height: 12px;
    margin-bottom: 6px;
}

.whosee {
    width: 625px;
    height: 49px;
    margin-left: 462px;
    background: #000;
    border-radius: 0 0 12px 12px;
    display: flex;
    align-items: center;
    padding-left: 20px;
    font-size: 24px;
    letter-spacing: -.1px;
    color: #a8a8a8;
    white-space: nowrap;
}

.whosee svg {
    width: 26px;
    height: 34px;
    margin-right: 9px;
}

/* dock */
.dock {
    position: absolute;
    left: 90px;
    top: 2102px;
    width: 3405px;
    height: 127px;
    border-radius: 36px;
    border: 2px solid rgba(255, 255, 255, .22);
    background: linear-gradient(90deg, #5e646e 0, #5f626c 460px, #7d5a6a 700px, #955c78 1040px, #a6616a 1400px, #9a5f74 1700px, #985c7c 2300px, #a86068 2900px, #c06552 3405px);
    display: flex;
    align-items: flex-start;
    padding: 17px 0 0 17px;
    gap: 28.4px;
}

.app {
    width: 78px;
    height: 80px;
    flex: none;
    position: relative;
}

.app svg {
    width: 78px;
    height: 80px;
    overflow: visible;
}

.app.is-open::after {
    content: "";
    position: absolute;
    left: 36px;
    top: 96px;
    width: 5px;
    height: 7px;
    border-radius: 50%;
    background: #1c0c10;
}

.app-badge {
    position: absolute;
    right: -14px;
    top: -10px;
    width: 36px;
    height: 38px;
    border-radius: 50%;
    background: #e8483c;
    color: #fff;
    font-size: 20px;
    line-height: 38px;
    text-align: center;
}

.app-doc svg {
    height: 92px;
    margin-top: -8px;
}

.app-trash {
    margin-left: 4px;
}

.app-trash svg {
    height: 92px;
    margin-top: -6px;
}

.dock-sep {
    width: 2px;
    height: 96px;
    background: rgba(60, 20, 20, .55);
    margin-top: -3px;
    flex: none;
}

.dock-sep-a {
    margin-left: 11px;
    margin-right: 6px;
}

.dock-sep-b {
    margin-left: 10px;
    margin-right: 8px;
}

.cal-mon {
    fill: #fff;
    font-size: 13px;
    text-anchor: middle;
}

.cal-day {
    fill: #222;
    font-size: 42px;
    font-weight: 300;
    text-anchor: middle;
}

.tv-text {
    fill: #f5f5f5;
    font-size: 28px;
    font-weight: 500;
    text-anchor: middle;
}

.office-text {
    fill: #fff;
    font-size: 22px;
    font-family: "Liberation Sans", sans-serif;
    text-anchor: middle;
}

.ij-text {
    fill: #fff;
    font-family: "Liberation Mono", monospace;
    font-weight: 700;
    font-size: 30px;
    text-anchor: middle;
}

.zoom-text {
    fill: #fff;
    font-size: 21px;
    font-weight: 500;
    text-anchor: middle;
}

.doc-mon {
    fill: #fff;
    font-size: 14px;
    text-anchor: middle;
}

.doc-day {
    fill: #222;
    font-size: 32px;
    text-anchor: middle;
}

.doc-note {
    fill: #666;
    font-size: 6px;
    text-anchor: middle;
}
```
